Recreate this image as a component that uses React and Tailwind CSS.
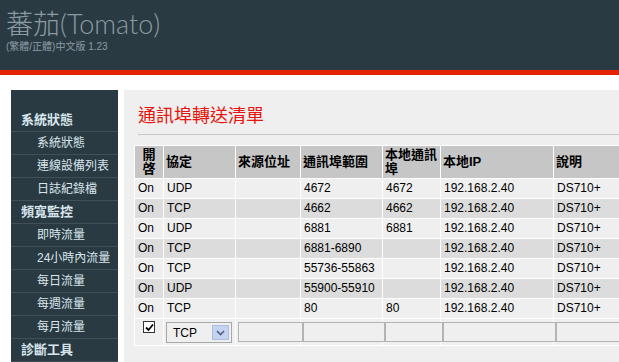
import React from "react";

const menu = [
  { label: "系統狀態", head: true },
  { label: "系統狀態" },
  { label: "連線設備列表" },
  { label: "日誌紀錄檔" },
  { label: "頻寬監控", head: true },
  { label: "即時流量" },
  { label: "24小時內流量" },
  { label: "每日流量" },
  { label: "每週流量" },
  { label: "每月流量" },
  { label: "診斷工具", head: true },
];

const rows = [
  ["On", "UDP", "", "4672", "4672", "192.168.2.40", "DS710+"],
  ["On", "TCP", "", "4662", "4662", "192.168.2.40", "DS710+"],
  ["On", "UDP", "", "6881", "6881", "192.168.2.40", "DS710+"],
  ["On", "TCP", "", "6881-6890", "", "192.168.2.40", "DS710+"],
  ["On", "TCP", "", "55736-55863", "", "192.168.2.40", "DS710+"],
  ["On", "UDP", "", "55900-55910", "", "192.168.2.40", "DS710+"],
  ["On", "TCP", "", "80", "80", "192.168.2.40", "DS710+"],
];

const cjk = { fontFamily: '"Liberation Sans", "Noto Sans CJK TC", sans-serif' };

const Box = () => (
  <div className="h-[20px] w-[calc(100%+3px)] border border-[#b4b4b4] bg-[#efefef]" />
);

export default function App() {
  return (
    <div className="w-[619px] h-[362px] overflow-hidden bg-white" style={cjk}>
      {/* header */}
      <div className="h-[70px] bg-[#2a3a42] pl-[6px] pt-[9px]">
        <div
          className="text-[27px] leading-[30px] text-[#8b9ba3]"
          style={{ fontFamily: 'Lato, "Noto Sans CJK TC", sans-serif', fontWeight: 300 }}
        >
          蕃茄(Tomato)
        </div>
        <div className="text-[10px] leading-[12px] mt-[2px] text-[#8b9ba3]">(繁體/正體)中文版 1.23</div>
      </div>
      <div className="h-[5px] bg-[#e52200]" />

      <div className="flex mt-[15px] h-[272px]">
        {/* sidebar */}
        <div className="ml-[11px] w-[107px] shrink-0 bg-[#2a3a42] pt-[19px]">
          {menu.map((m, i) => (
            <div
              key={i}
              className={
                "h-[23px] border-b border-[#3f5058] flex items-center whitespace-nowrap " +
                (m.head
                  ? "pl-[10px] text-[13px] font-bold text-[#d8e6ec]"
                  : "pl-[26px] text-[12px] text-[#d8e6ec]")
              }
            >
              {m.label}
            </div>
          ))}
        </div>

        {/* content */}
        <div className="ml-[6px] flex-1 min-w-0 bg-[#efefef] pl-[10px] pt-[15px] overflow-hidden">
          <div className="ml-[4px] text-[18px] leading-[22px] text-[#e5160d]">通訊埠轉送清單</div>
          <div className="ml-[4px] mt-[7px] h-[1px] bg-[#c8c8c8]" />
          <table className="mt-[10px] border-separate border-spacing-[1px] bg-white text-[12px] text-black table-fixed w-[580px] max-w-none">
            <colgroup>
              <col className="w-[28px]" />
              <col className="w-[71px]" />
              <col className="w-[64px]" />
              <col className="w-[81px]" />
              <col className="w-[57px]" />
              <col className="w-[112px]" />
              <col className="w-[160px]" />
            </colgroup>
            <thead>
              <tr className="h-[32px] bg-[#c6c6c6] text-[13px] font-bold">
                <th className="text-center font-bold leading-[14px] align-middle">開<br />啓</th>
                <th className="text-left pl-[2px] font-bold">協定</th>
                <th className="text-left pl-[2px] font-bold">來源位址</th>
                <th className="text-left pl-[2px] font-bold">通訊埠範圍</th>
                <th className="text-left pl-[2px] font-bold leading-[14px]">本地通訊<br />埠</th>
                <th className="text-left pl-[2px] font-bold">本地IP</th>
                <th className="text-left pl-[2px] font-bold">說明</th>
              </tr>
            </thead>
            <tbody>
              {rows.map((r, i) => (
                <tr key={i} className={"h-[19px] " + (i % 2 ? "bg-[#dcdcdc]" : "bg-[#efefef]")}>
                  {r.map((c, j) => (
                    <td key={j} className="pl-[3px] leading-[19px] whitespace-nowrap overflow-hidden">
                      {c}
                    </td>
                  ))}
                </tr>
              ))}
              <tr className="h-[26px] bg-[#efefef]">
                <td className="pl-[8px] align-top pt-[2px]">
                  <div className="w-[12px] h-[12px] border border-[#333] bg-white flex items-center justify-center">
                    <svg width="9" height="9" viewBox="0 0 9 9">
                      <path d="M1 4.5 L3.5 7 L8 1.5" stroke="#000" strokeWidth="1.8" fill="none" />
                    </svg>
                  </div>
                </td>
                <td className="pl-[2px] align-top pt-[3px]">
                  <div className="w-[66px] h-[21px] border border-[#a8a8a8] bg-[#efefef] flex items-center justify-between pl-[6px] pr-[2px]">
                    <span className="text-[12px]">TCP</span>
                    <span className="w-[17px] h-[15px] bg-[#c3d3f0] border border-[#a9bde6] flex items-center justify-center">
                      <svg width="9" height="6" viewBox="0 0 9 6">
                        <path d="M1 1 L4.5 4.5 L8 1" stroke="#4d6185" strokeWidth="1.6" fill="none" />
                      </svg>
                    </span>
                  </div>
                </td>
                <td className="pl-[2px] align-top pt-[3px]"><Box /></td>
                <td className="pl-[2px] align-top pt-[3px]"><Box /></td>
                <td className="pl-[2px] align-top pt-[3px]"><Box /></td>
                <td className="pl-[2px] align-top pt-[3px]"><Box /></td>
                <td className="pl-[2px] align-top pt-[3px]"><Box /></td>
              </tr>
            </tbody>
          </table>
        </div>
      </div>
    </div>
  );
}
